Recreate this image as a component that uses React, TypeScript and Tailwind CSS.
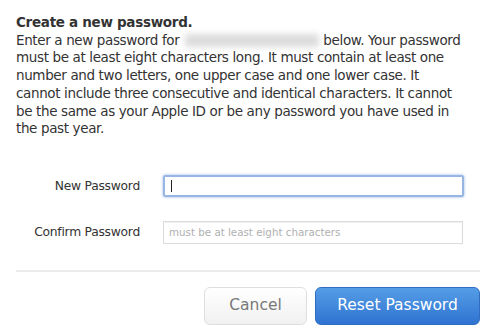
import React from "react";

export default function App() {
  const font = { fontFamily: '"DejaVu Sans", "Liberation Sans", sans-serif' };
  return (
    <div className="w-[496px] h-[330px] bg-white overflow-hidden" style={font}>
      <div className="pl-[16px] pr-[16px] pt-[14px] text-[#333333] text-[13.5px] leading-[17.7px] tracking-[-0.37px]">
        <div className="font-bold text-[#333333] tracking-[-0.3px]">Create a new password.</div>
        <div>
          <div className="flex items-center whitespace-nowrap">
            <span>Enter a new password for</span>
            <span className="inline-block w-[134px] h-[13px] ml-[6px] mr-[4px] bg-[#dcdcdc] blur-[3px]" />
            <span>below. Your password</span>
          </div>
          <div className="whitespace-nowrap">must be at least eight characters long. It must contain at least one</div>
          <div className="whitespace-nowrap">number and two letters, one upper case and one lower case. It</div>
          <div className="whitespace-nowrap">cannot include three consecutive and identical characters. It cannot</div>
          <div className="whitespace-nowrap">be the same as your Apple ID or be any password you have used in</div>
          <div className="whitespace-nowrap">the past year.</div>
        </div>
      </div>

      <div className="mt-[37px] flex flex-col gap-[24px]">
        <div className="flex items-center">
          <div className="w-[140px] text-right text-[12.3px] text-[#333333] tracking-[-0.25px]">New Password</div>
          <div className="ml-[23px] w-[301px] h-[22px] border-2 border-[#98b6e4] shadow-[0_0_3px_rgba(80,130,210,0.6)] rounded-[2px] flex items-center pl-[6px]">
            <div className="w-[1px] h-[12px] bg-[#222]" />
          </div>
        </div>
        <div className="flex items-center">
          <div className="w-[140px] text-right text-[12.3px] text-[#333333] tracking-[-0.25px]">Confirm Password</div>
          <div className="ml-[23px] w-[300px] h-[23px] border border-[#dcdcdc] shadow-[inset_0_1px_1px_rgba(0,0,0,0.06)] flex items-center pl-[5px] text-[10.3px] text-[#b0b0b0]">
            must be at least eight characters
          </div>
        </div>
      </div>

      <div className="mt-[26px] ml-[16px] w-[464px] h-[2px] bg-[#ebebeb]" />

      <div className="mt-[15px] flex justify-end pr-[16px] gap-[8px]">
        <button className="w-[103px] h-[38px] rounded-[6px] border border-[#dedede] bg-gradient-to-b from-[#ffffff] to-[#f1f1f1] text-[#777777] text-[15.5px]">
          Cancel
        </button>
        <button className="w-[165px] h-[38px] rounded-[6px] border border-[#2f6dc2] bg-gradient-to-b from-[#559de6] to-[#2f73d1] text-white text-[15.5px]">
          Reset Password
        </button>
      </div>
    </div>
  );
}
